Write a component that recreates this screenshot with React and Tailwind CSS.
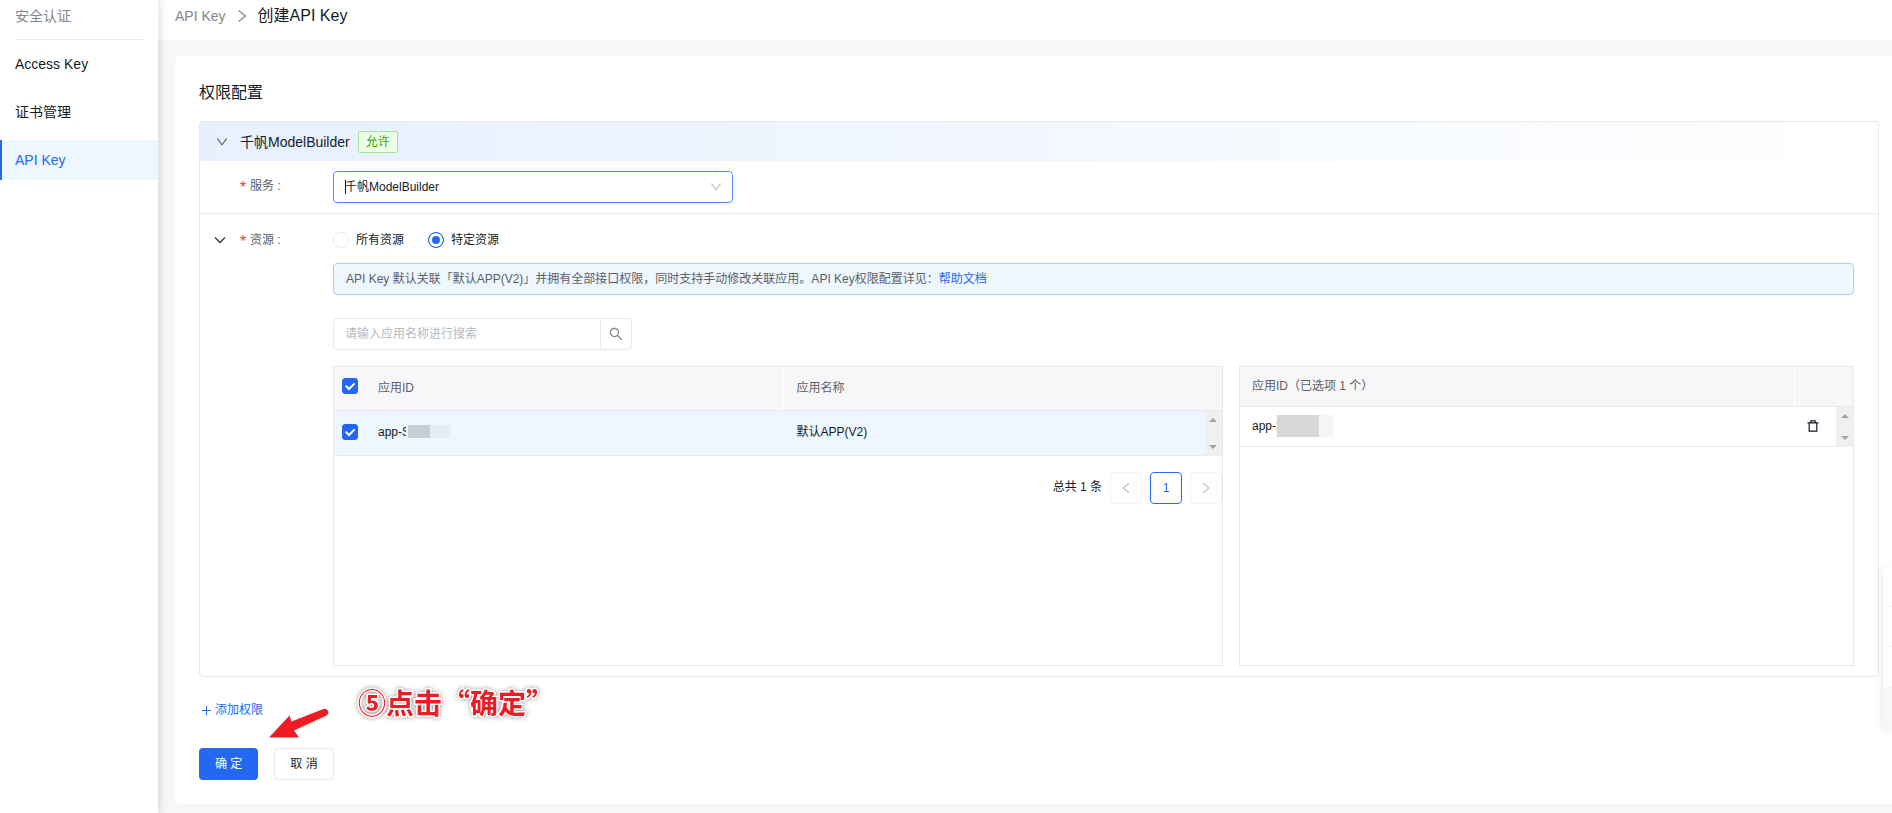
import { useState } from 'react';
import {
  AiOutlineDown,
  AiOutlineLeft,
  AiOutlinePlus,
  AiOutlineRight,
  AiOutlineSearch,
} from 'react-icons/ai';

const MENU_ITEMS = [
  { key: 'access-key', label: 'Access Key' },
  { key: 'cert', label: '证书管理' },
  { key: 'api-key', label: 'API Key' },
];

const RESOURCE_OPTIONS = [
  { value: 'all', label: '所有资源' },
  { value: 'custom', label: '特定资源' },
];

function Sidebar({ active }) {
  return (
    <aside className="relative z-10 w-[158px] shrink-0 bg-white shadow-[2px_0_8px_rgba(7,12,20,0.12)]">
      <div className="mx-[15px] h-10 border-b border-[#e8e9eb] pt-[6px] leading-5 text-[#84868c]">
        安全认证
      </div>
      <nav className="flex flex-col gap-2 pt-1">
        {MENU_ITEMS.map((item) => (
          <a
            key={item.key}
            href={`#${item.key}`}
            className={
              item.key === active
                ? 'h-10 border-l-2 border-[#2468f2] bg-[#eef6ff] pl-[13px] leading-10 text-[#2468f2]'
                : 'h-10 pl-[15px] leading-10'
            }
          >
            {item.label}
          </a>
        ))}
      </nav>
    </aside>
  );
}

function FormLabel({ htmlFor, children }) {
  return (
    <label htmlFor={htmlFor} className="flex w-[93px] shrink-0 gap-1 leading-5 text-[#5c5f66]">
      <span className="w-[6px] pt-[2px] text-base leading-5 text-[#f33e3e]">*</span>
      <span>{children}&nbsp;:</span>
    </label>
  );
}

function Checkbox({ label, checked, onChange }) {
  return (
    <span className="grid size-4 place-items-center">
      <input
        type="checkbox"
        aria-label={label}
        checked={checked}
        onChange={onChange}
        className="peer col-start-1 row-start-1 size-4 appearance-none rounded-[3px] border border-[#d4d6d9] bg-white checked:border-[#2468f2] checked:bg-[#2468f2]"
      />
      <svg viewBox="0 0 16 16" className="pointer-events-none invisible col-start-1 row-start-1 size-4 peer-checked:visible">
        <path d="M3.6 7.6 7 11l5.6-5.6" fill="none" stroke="#fff" strokeWidth="2" />
      </svg>
    </span>
  );
}

// Barra de scroll estática
function ScrollBar() {
  return (
    <div className="flex h-full flex-col items-center justify-between bg-[#f0f0f0] py-[7px]">
      <svg viewBox="0 0 8 4" className="h-1 w-2">
        <path d="M0 4 4 0l4 4z" fill="#a3a3a3" />
      </svg>
      <svg viewBox="0 0 8 4" className="h-1 w-2">
        <path d="M0 0h8L4 4z" fill="#a3a3a3" />
      </svg>
    </div>
  );
}

function AppTable({ checked, onToggle }) {
  return (
    <div className="border border-[#e8e9eb]">
      <table className="w-full table-fixed border-separate border-spacing-0 text-left">
        <colgroup>
          <col className="w-[42px]" />
          <col className="w-[46%]" />
          <col />
          <col className="w-[17px]" />
        </colgroup>
        <thead>
          <tr className="h-11 bg-[#f7f7f9] text-[#5c5f66]">
            <th className="border-b border-[#e8e9eb] pb-[5px] pl-2 font-normal">
              <Checkbox label="全选" checked={checked} onChange={onToggle} />
            </th>
            <th className="border-r border-b border-r-white border-b-[#e8e9eb] pb-[2px] pl-[2px] font-normal">应用ID</th>
            <th colSpan={2} className="border-b border-[#e8e9eb] pb-[2px] pl-3 font-normal">应用名称</th>
          </tr>
        </thead>
        <tbody>
          <tr className="h-[45px] bg-[#eef6ff]">
            <td className="border-b border-[#e8e9eb] pb-[3px] pl-2">
              <Checkbox label="选择应用" checked={checked} onChange={onToggle} />
            </td>
            <td className="border-b border-[#e8e9eb] pb-[3px] pl-[2px]">
              <div className="flex items-center">
                <span>app-S</span>
                <span className="relative -ml-1 h-[13px] w-6 border-l-2 border-[#eef6ff] bg-[#c8ced7]"></span>
                <span className="h-[13px] w-5 bg-[#e6ecf5]"></span>
              </div>
            </td>
            <td className="border-b border-[#e8e9eb] pb-[3px] pl-3">默认APP(V2)</td>
            <td className="h-[45px] p-0">
              <ScrollBar />
            </td>
          </tr>
        </tbody>
      </table>

      {/* Paginación */}
      <div className="mt-4 flex items-center justify-end gap-2">
        <span className="pb-[2px]">总共 1 条</span>
        <button type="button" disabled aria-label="上一页" className="grid size-8 place-items-center rounded border border-[#f5f5f6] text-[#b8babf]">
          <AiOutlineLeft className="size-[14px]" />
        </button>
        <button type="button" className="size-8 rounded border border-[#2468f2] text-[#2468f2]">
          1
        </button>
        <button type="button" disabled aria-label="下一页" className="grid size-8 place-items-center rounded border border-[#f5f5f6] text-[#b8babf]">
          <AiOutlineRight className="size-[14px]" />
        </button>
      </div>
    </div>
  );
}

function SelectedTable() {
  return (
    <div className="border border-[#e8e9eb]">
      <table className="w-full table-fixed border-separate border-spacing-0 text-left">
        <colgroup>
          <col />
          <col className="w-[41px]" />
          <col className="w-[17px]" />
        </colgroup>
        <thead>
          <tr className="h-10 bg-[#f7f7f9] text-[#5c5f66]">
            <th className="border-r border-b border-r-white border-b-[#e8e9eb] pb-[2px] pl-3 font-normal">
              应用ID（已选项 1 个）
            </th>
            <th colSpan={2} aria-label="操作" className="border-b border-[#e8e9eb]"></th>
          </tr>
        </thead>
        <tbody>
          <tr className="h-10">
            <td className="border-b border-[#e8e9eb] pb-[2px] pl-3">
              <div className="flex items-center">
                <span>app-3</span>
                <span className="relative -ml-[6px] h-[22px] w-[42px] bg-[#d8d8da]"></span>
                <span className="h-[22px] w-[14px] bg-[#f5f5f6]"></span>
              </div>
            </td>
            <td className="border-b border-[#e8e9eb] pb-[2px] pl-3">
              <button type="button" aria-label="删除" className="block">
                <svg viewBox="0 0 12 12" className="size-3">
                  <path d="M.5 2.8h11M3.8 2.5V.8h4.4v1.7M2.2 3v8.2h7.6V3" fill="none" stroke="#151b26" strokeWidth="1.2" />
                </svg>
              </button>
            </td>
            <td className="h-10 p-0">
              <ScrollBar />
            </td>
          </tr>
        </tbody>
      </table>
    </div>
  );
}

export default function App() {
  const [resource, setResource] = useState('custom');
  const [checked, setChecked] = useState(true);
  const [keyword, setKeyword] = useState('');

  return (
    <div className="flex min-h-screen overflow-hidden bg-[#f7f7f9] font-['Liberation_Sans','Noto_Sans_CJK_SC',sans-serif] text-sm text-[#151b26]">
      <Sidebar active="api-key" />

      <div className="min-w-0 flex-1">
        <header className="flex h-10 items-center gap-2 bg-white pb-2 pl-[17px]">
          <a href="#api-key" className="text-[#84868c]">API Key</a>
          <AiOutlineRight className="size-4 text-[#84868c]" />
          <h1 className="text-base leading-6">创建API Key</h1>
        </header>

        <main className="mt-4 mb-[9px] ml-[17px] rounded-l-md bg-white pt-[25px] pr-[13px] pb-6 pl-6 text-xs">
          <h2 className="text-base leading-6">权限配置</h2>

          <section className="mt-4 rounded border border-[#e8e9eb]">
            <div className="flex h-[39px] items-center rounded-t bg-linear-to-r from-[#e6f0ff] to-white pl-[15px]">
              <AiOutlineDown className="size-[14px] text-[#5c5f66]" />
              <h3 className="ml-[11px] text-sm">千帆ModelBuilder</h3>
              <span className="ml-2 rounded-xs border border-[#a1e693] bg-[#ecffe6] px-[7px] leading-5 text-[#30a611]">
                允许
              </span>
            </div>

            {/* Servicio */}
            <div className="flex items-center border-b border-[#e8e9eb] py-[10px] pl-10">
              <FormLabel htmlFor="service">服务</FormLabel>
              <div className="relative w-[400px]">
                <select
                  id="service"
                  name="service"
                  className="h-8 w-full appearance-none rounded border border-[#528eff] bg-white px-[11px]"
                >
                  <option>千帆ModelBuilder</option>
                </select>
                <span className="absolute top-[9px] left-3 h-[14px] w-px bg-[#151b26]"></span>
                <AiOutlineDown className="pointer-events-none absolute top-[9px] right-[10px] size-[14px] text-[#b8babf]" />
              </div>
            </div>

            {/* Recursos */}
            <div className="flex items-start pt-4 pr-6 pb-[10px] pl-[14px]">
              <svg viewBox="0 0 12 12" className="mt-1 mr-[14px] size-3 shrink-0">
                <path d="M1 3.5 6 8.5l5-5" fill="none" stroke="#303540" strokeWidth="1.3" />
              </svg>
              <FormLabel>资源</FormLabel>

              <div className="min-w-0 flex-1">
                <div className="flex gap-6">
                  {RESOURCE_OPTIONS.map((option) => (
                    <label key={option.value} className="flex items-center gap-[7px] leading-5">
                      <input
                        type="radio"
                        name="resource"
                        value={option.value}
                        checked={resource === option.value}
                        onChange={() => setResource(option.value)}
                        className="size-4 appearance-none rounded-full border border-[#e8e9eb] bg-white checked:border-[#2468f2] checked:bg-[#2468f2] checked:shadow-[inset_0_0_0_3px_white]"
                      />
                      {option.label}
                    </label>
                  ))}
                </div>

                <p className="mt-[13px] rounded border border-[#a8cdff] bg-[#eef6ff] px-3 py-[5px] leading-5 text-[#5c5f66]">
                  API Key 默认关联「默认APP(V2)」并拥有全部接口权限，同时支持手动修改关联应用。API Key权限配置详见：
                  <a href="#help" className="text-[#2468f2]">帮助文档</a>
                </p>

                <div className="mt-[23px] flex h-8 w-[299px] rounded border border-[#e8e9eb]">
                  <input
                    type="text"
                    aria-label="应用名称"
                    placeholder="请输入应用名称进行搜索"
                    value={keyword}
                    onChange={(e) => setKeyword(e.target.value)}
                    className="min-w-0 flex-1 border-r border-[#e8e9eb] px-[11px] outline-none placeholder:text-[#b8babf]"
                  />
                  <button type="button" aria-label="搜索" className="grid w-[30px] place-items-center text-[#84868c]">
                    <AiOutlineSearch className="size-4" />
                  </button>
                </div>

                <div className="mt-4 grid h-[300px] grid-cols-[890fr_615fr] gap-4">
                  <AppTable checked={checked} onToggle={() => setChecked(!checked)} />
                  <SelectedTable />
                </div>
              </div>
            </div>
          </section>

          <div className="relative pt-[23px]">
            <button type="button" className="flex items-center gap-[2px] pl-px leading-5 text-[#2468f2]">
              <AiOutlinePlus className="size-[13px]" />
              添加权限
            </button>

            <div className="mt-7 flex gap-4">
              <button type="submit" className="h-8 rounded bg-[#2468f2] px-4 text-white">确 定</button>
              <button type="button" className="h-8 rounded border border-[#e8e9eb] px-[15px]">取 消</button>
            </div>

            {/* Anotación del paso */}
            <svg viewBox="0 0 60 32" className="absolute top-[30px] left-[70px] h-8 w-[60px]">
              <path d="M0 30.5 20.5 8.5 22.5 14.5 54.5 2A3.6 3.6 0 0 1 57.5 8.500L25 23.500 30 30.500z" fill="#ed1c24" />
            </svg>
            <p className="absolute top-[5px] left-[159px] font-['Noto_Sans_CJK_SC',sans-serif] text-[28px] leading-10 font-bold whitespace-nowrap text-[#ed1c24] [filter:drop-shadow(0_0_2px_#999)] [paint-order:stroke_fill] [-webkit-text-stroke:3px_white]">
              ⑤点击“确定”
            </p>
          </div>
        </main>
      </div>

      {/* Widget flotante */}
      <div className="fixed top-[567px] right-0 z-20 flex h-40 w-[9px] flex-col overflow-hidden rounded-l bg-white shadow-[0_2px_8px_rgba(7,12,20,0.12)]">
        <div className="ml-2 h-10 border-b border-[#e8e9eb]"></div>
        <div className="ml-2 h-10 border-b border-[#e8e9eb]"></div>
        <div className="h-10"></div>
        <div className="h-10 bg-[#f7f7f9]"></div>
      </div>
    </div>
  );
}
